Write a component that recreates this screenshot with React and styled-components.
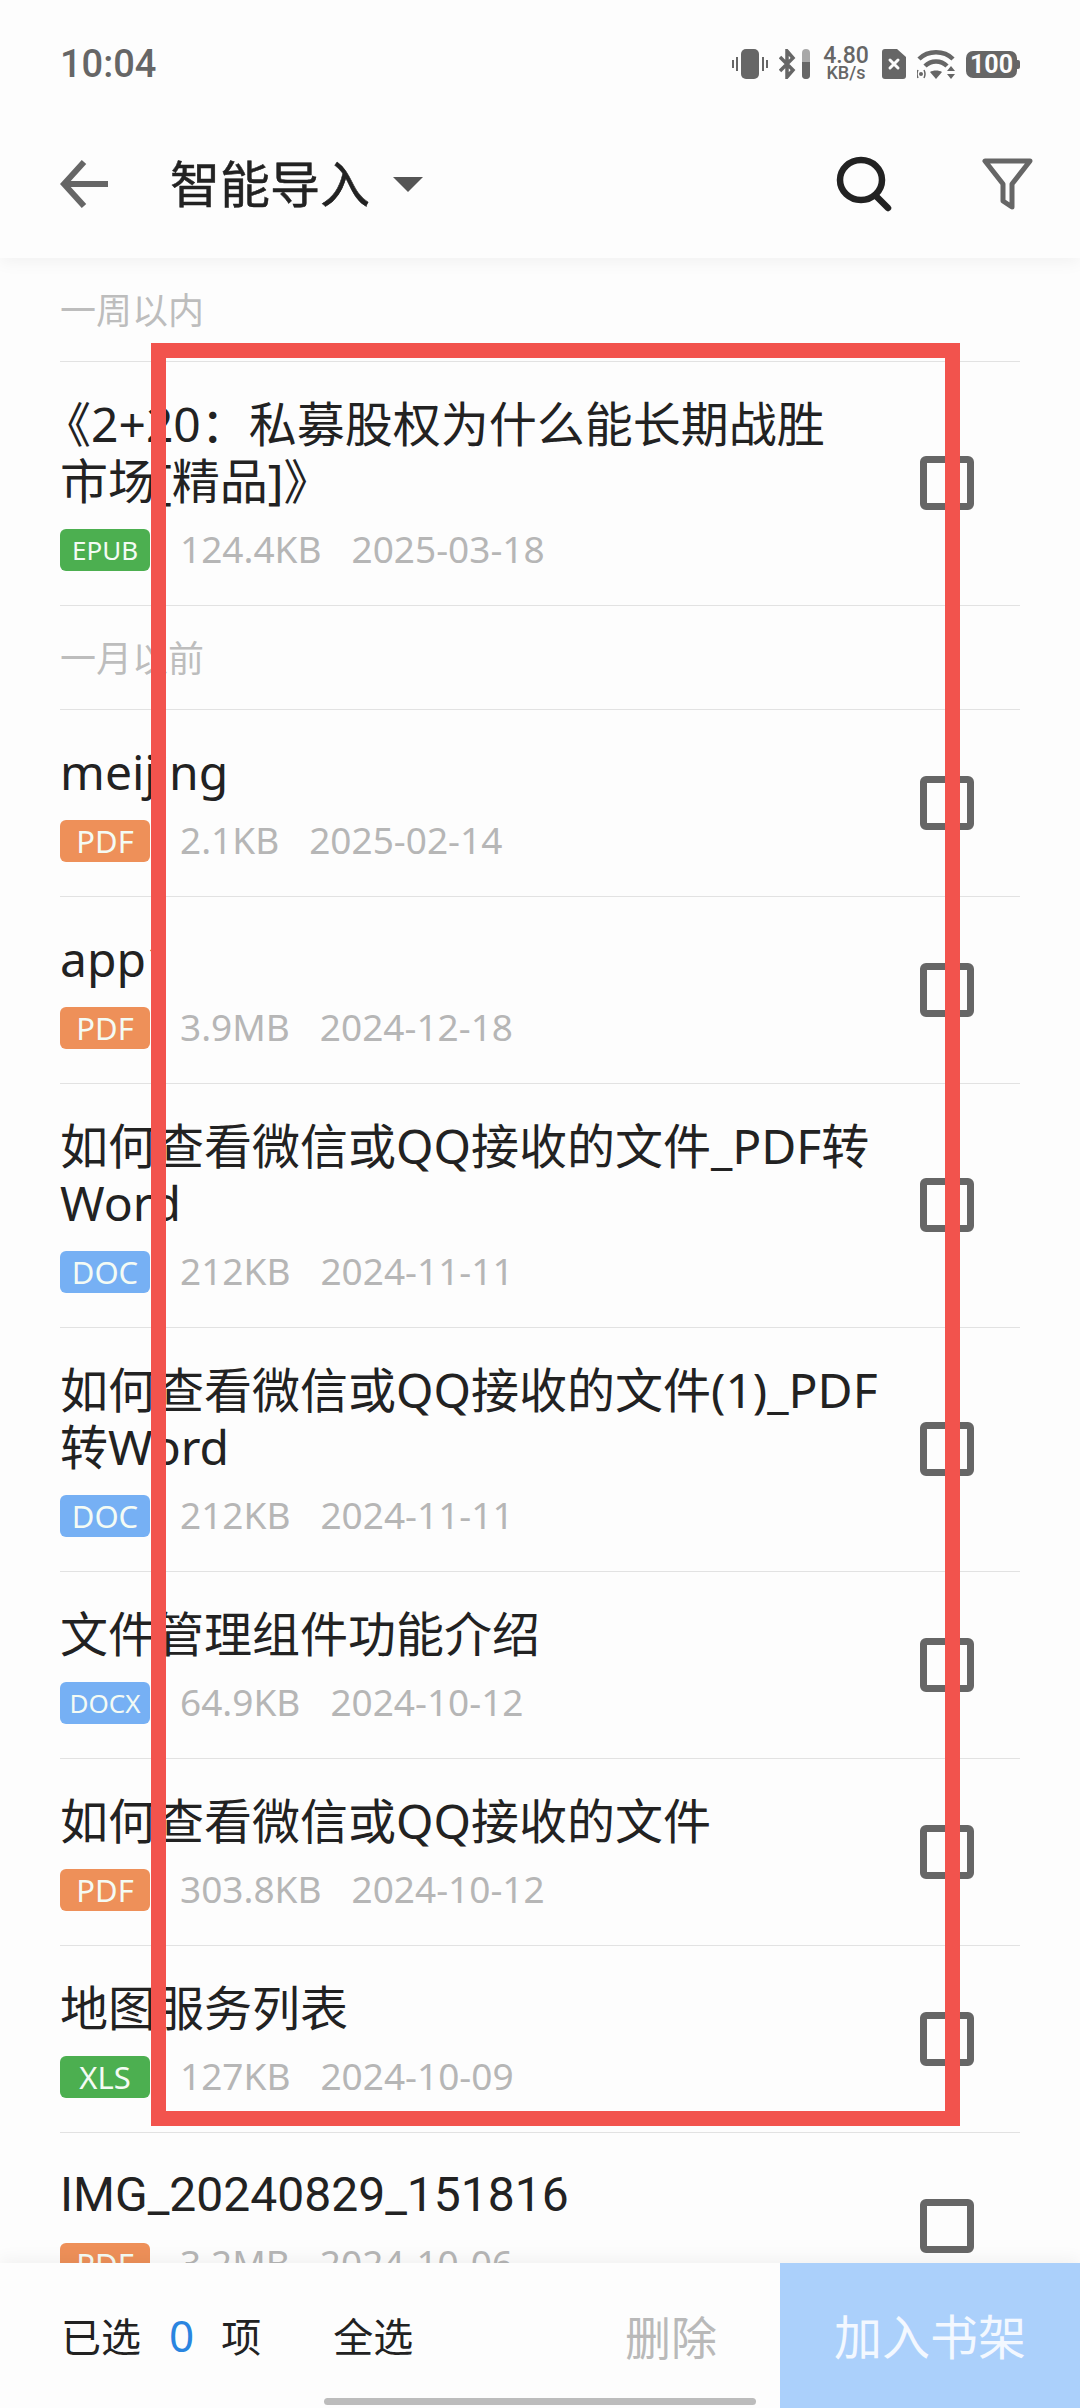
import React from "react";
import styled, { createGlobalStyle } from "styled-components";

const Global = createGlobalStyle`
  html, body { margin: 0; padding: 0; background: #fdfdfd; }
  * { box-sizing: border-box; }
`;

const FONT = `"Noto Sans", "Noto Sans CJK SC", sans-serif`;
const DIGIT_FONT = `"Roboto", "Noto Sans CJK SC", sans-serif`;

const Page = styled.div`
  position: relative;
  width: 1080px;
  height: 2408px;
  overflow: hidden;
  display: flex;
  flex-direction: column;
  background: #fdfdfd;
  font-family: ${FONT};
`;

const Header = styled.header`
  height: 258px;
  flex: none;
  position: relative;
  z-index: 2;
  background: #fdfdfd;
  box-shadow: 0 4px 16px rgba(0, 0, 0, 0.05);
`;

const StatusBar = styled.div`
  height: 128px;
  padding: 0 60px;
  display: flex;
  align-items: center;
  justify-content: space-between;
  color: #666;
`;

const Time = styled.span`
  font-family: "Roboto", ${FONT};
  font-size: 38px;
  font-weight: 500;
`;

const StatusIcons = styled.div`
  display: flex;
  align-items: center;
  gap: 11px;
`;

const Speed = styled.div`
  width: 50px;
  display: flex;
  flex-direction: column;
  align-items: center;
  font-family: "Roboto", ${FONT};
  font-weight: 500;
  color: #666;
  line-height: 17px;
  font-size: 23px;
  small { font-size: 18px; }
`;

const Battery = styled.div`
  position: relative;
  width: 51px;
  height: 27px;
  border-radius: 7px;
  background: #666;
  color: #fdfdfd;
  display: flex;
  align-items: center;
  justify-content: center;
  font-family: "Roboto", ${FONT};
  font-size: 25px;
  font-weight: 700;
  margin-right: 3px;
  &::after {
    content: "";
    position: absolute;
    right: -3px;
    top: 9px;
    width: 3px;
    height: 9px;
    background: #666;
    border-radius: 0 2px 2px 0;
  }
`;

const Toolbar = styled.div`
  height: 112px;
  padding: 0 46px 0 60px;
  display: flex;
  align-items: center;
`;

const Title = styled.h1`
  margin: 0 0 0 62px;
  font-size: 50px;
  font-weight: 400;
  -webkit-text-stroke: 0.5px #222;
  color: #222;
  line-height: 60px;
`;

const Caret = styled.span`
  margin-left: 23px;
  width: 0;
  height: 0;
  border-left: 15px solid transparent;
  border-right: 15px solid transparent;
  border-top: 15px solid #555;
`;

const ToolbarSpacer = styled.div`
  flex: 1;
`;

const List = styled.main`
  flex: 1;
  min-height: 0;
  overflow: hidden;
`;

const SectionLabel = styled.div`
  height: 104px;
  margin: 0 60px;
  padding-bottom: 2px;
  display: flex;
  align-items: center;
  font-size: 36px;
  color: #bdbdbd;
  border-bottom: 1px solid #e2e2e2;
`;

const Row = styled.div`
  position: relative;
  margin: 0 60px;
  padding: 33px 0 34px;
  display: flex;
  align-items: center;
  justify-content: space-between;
  border-bottom: 1px solid #e2e2e2;
  &::after {
    content: "";
    position: absolute;
    left: -60px;
    right: -60px;
    bottom: -1px;
    height: 1px;
    z-index: -1;
    background: #f6f6f6;
  }
`;

const RowBody = styled.div`
  width: 830px;
`;

const RowTitle = styled.div`
  font-family: ${(p) => (p.$digits ? DIGIT_FONT : FONT)};
  font-size: 48px;
  line-height: 57px;
  color: #222;
  word-break: break-all;
  text-indent: ${(p) => (p.$hanging ? "-17px" : "0")};
  padding-right: ${(p) => (p.$hanging ? "40px" : "0")};
`;

const Meta = styled.div`
  margin-top: 20px;
  height: 42px;
  display: flex;
  align-items: center;
  font-size: 37px;
  color: #b6b6b6;
`;

const TAG_COLORS = { green: "#4caf50", orange: "#ee9059", blue: "#76b0f4" };

const Tag = styled.span`
  flex: none;
  width: 90px;
  height: 42px;
  border-radius: 6px;
  background: ${(p) => TAG_COLORS[p.$tone]};
  color: #f4fbf4;
  font-size: ${(p) => (p.$small ? 26 : 31)}px;
  line-height: 42px;
  text-align: center;
  margin-right: 30px;
`;

const Size = styled.span`
  margin: 0 30px 4px 0;
`;

const DateText = styled.span`
  margin-bottom: 4px;
`;

const Check = styled.span`
  flex: none;
  width: 54px;
  height: 54px;
  margin-right: 46px;
  border: 7px solid #666;
  border-radius: 6px;
`;

const BottomBar = styled.footer`
  height: 145px;
  flex: none;
  position: relative;
  z-index: 2;
  background: #fdfdfd;
  box-shadow: 0 -4px 16px rgba(0, 0, 0, 0.05);
  display: flex;
  align-items: stretch;
`;

const Selection = styled.div`
  width: 625px;
  flex: none;
  padding: 0 0 2px 61px;
  display: flex;
  align-items: center;
  font-size: 40px;
  color: #222;
`;

const Count = styled.span`
  margin: 0 27px 0 28px;
  font-size: 44px;
  color: #2a85e0;
`;

const SelectAll = styled.span`
  margin-left: 72px;
`;

const DeleteAction = styled.div`
  width: 155px;
  flex: none;
  padding-bottom: 2px;
  display: flex;
  align-items: center;
  font-size: 46px;
  color: #b9b9b9;
`;

const ShelfButton = styled.div`
  flex: 1;
  background: #abd0fb;
  color: #f3f8ff;
  display: flex;
  align-items: center;
  justify-content: center;
  padding-bottom: 4px;
  font-size: 48px;
`;

const HomeBar = styled.div`
  position: absolute;
  left: 324px;
  bottom: 3px;
  width: 432px;
  height: 7px;
  border-radius: 4px;
  background: #bcbcbc;
`;

const Frame = styled.div`
  position: absolute;
  z-index: 1;
  left: 151px;
  top: 343px;
  width: 809px;
  height: 1783px;
  border: 15px solid #f2534d;
`;

const Vibrate = () => (
  <svg width="36" height="30" viewBox="0 0 36 30" fill="#666">
    <rect x="9" y="0" width="18" height="30" rx="5" />
    <rect x="4" y="8" width="2" height="14" />
    <rect x="0" y="11" width="2" height="8" />
    <rect x="30" y="8" width="2" height="14" />
    <rect x="34" y="11" width="2" height="8" />
  </svg>
);

const Bluetooth = () => (
  <svg width="31" height="30" viewBox="0 0 31 30">
    <path d="M1 8l13 13-6 7V2l6 7L1 22" fill="none" stroke="#666" strokeWidth="3.500" />
    <rect x="23" y="0" width="8" height="30" rx="4" fill="#a8a8a8" />
    <path d="M23 13h8v13a4 4 0 0 1-8 0z" fill="#666" />
  </svg>
);

const Sim = () => (
  <svg width="24" height="30" viewBox="0 0 24 30">
    <path d="M3 0h12l9 8v19a3 3 0 0 1-3 3H3a3 3 0 0 1-3-3V3a3 3 0 0 1 3-3z" fill="#666" />
    <path d="M8 11l8 8M16 11l-8 8" stroke="#fdfdfd" strokeWidth="3" strokeLinecap="round" />
  </svg>
);

const Wifi = () => (
  <svg width="38" height="30" viewBox="0 0 38 30" fill="none" stroke="#666">
    <path d="M2 10C11 1 27 1 36 10" strokeWidth="4.500" />
    <path d="M8 17c6-6 16-6 22 0" strokeWidth="4.500" />
    <path d="M13 23l6 7 6-7c-3-2-9-2-12 0z" fill="#666" stroke="none" />
    <circle cx="4" cy="25" r="2" fill="#666" stroke="none" />
    <path d="M1 21c-1.500 3-1.500 5 0 8M7 21c1.500 3 1.500 5 0 8" strokeWidth="1.500" />
    <path d="M34 17l-4 5h8zM34 30l-4-5h8z" fill="#666" stroke="none" />
  </svg>
);

const Back = () => (
  <svg width="48" height="48" viewBox="0 0 48 48" fill="none" stroke="#666" strokeWidth="6">
    <path d="M24 2L4 24l20 22M4 24h44" />
  </svg>
);

const Search = () => (
  <svg width="56" height="56" viewBox="0 0 56 56" fill="none" stroke="#222" strokeWidth="6.500" strokeLinecap="round">
    <ellipse cx="25" cy="24" rx="21" ry="20" />
    <path d="M41 41l11 11" />
  </svg>
);

const Filter = () => (
  <svg width="52" height="54" viewBox="0 0 52 54" fill="none" stroke="#666" strokeWidth="5" strokeLinejoin="round" style={{ marginLeft: 90 }}>
    <path d="M3 4h45L30 27v23l-9-6V27z" />
  </svg>
);

const sections = [
  {
    label: "一周以内",
    items: [
      { name: "《2+20：私募股权为什么能长期战胜市场[精品]》", hanging: true, tag: "EPUB", tone: "green", size: "124.4KB", date: "2025-03-18" },
    ],
  },
  {
    label: "一月以前",
    items: [
      { name: "meijing", tag: "PDF", tone: "orange", size: "2.1KB", date: "2025-02-14" },
      { name: "app1", tag: "PDF", tone: "orange", size: "3.9MB", date: "2024-12-18" },
      { name: "如何查看微信或QQ接收的文件_PDF转Word", tag: "DOC", tone: "blue", size: "212KB", date: "2024-11-11" },
      { name: "如何查看微信或QQ接收的文件(1)_PDF转Word", tag: "DOC", tone: "blue", size: "212KB", date: "2024-11-11" },
      { name: "文件管理组件功能介绍", tag: "DOCX", tone: "blue", size: "64.9KB", date: "2024-10-12" },
      { name: "如何查看微信或QQ接收的文件", tag: "PDF", tone: "orange", size: "303.8KB", date: "2024-10-12" },
      { name: "地图服务列表", tag: "XLS", tone: "green", size: "127KB", date: "2024-10-09" },
      { name: "IMG_20240829_151816", digits: true, tag: "PDF", tone: "orange", size: "3.2MB", date: "2024-10-06" },
    ],
  },
];

export default function App() {
  return (
    <Page>
      <Global />
      <Header>
        <StatusBar>
          <Time>10:04</Time>
          <StatusIcons>
            <Vibrate />
            <Bluetooth />
            <Speed>
              <span>4.80</span>
              <small>KB/s</small>
            </Speed>
            <Sim />
            <Wifi />
            <Battery>100</Battery>
          </StatusIcons>
        </StatusBar>
        <Toolbar>
          <Back />
          <Title>智能导入</Title>
          <Caret />
          <ToolbarSpacer />
          <Search />
          <Filter />
        </Toolbar>
      </Header>
      <List>
        {sections.map((s) => (
          <section key={s.label}>
            <SectionLabel>{s.label}</SectionLabel>
            {s.items.map((it) => (
              <Row key={it.name}>
                <RowBody>
                  <RowTitle $hanging={it.hanging} $digits={it.digits}>{it.name}</RowTitle>
                  <Meta>
                    <Tag $tone={it.tone} $small={it.tag.length > 3}>{it.tag}</Tag>
                    <Size>{it.size}</Size>
                    <DateText>{it.date}</DateText>
                  </Meta>
                </RowBody>
                <Check />
              </Row>
            ))}
          </section>
        ))}
      </List>
      <BottomBar>
        <Selection>
          已选<Count>0</Count>项<SelectAll>全选</SelectAll>
        </Selection>
        <DeleteAction>删除</DeleteAction>
        <ShelfButton>加入书架</ShelfButton>
        <HomeBar />
      </BottomBar>
      <Frame />
    </Page>
  );
}
